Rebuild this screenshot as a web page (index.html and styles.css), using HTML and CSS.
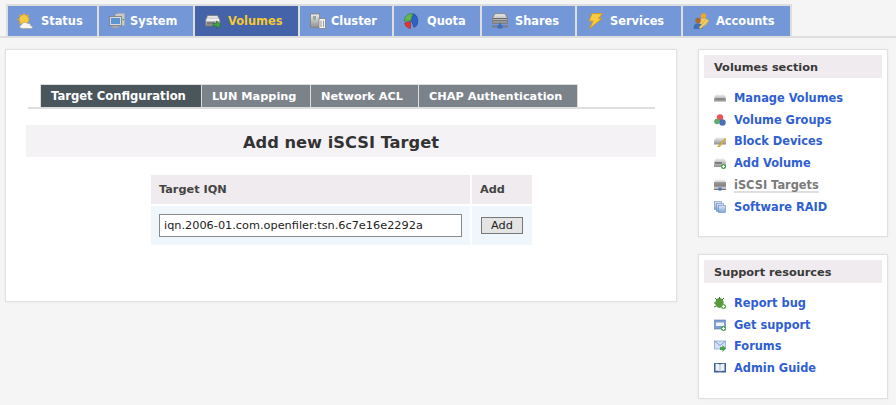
FILE: index.html
```html
<!DOCTYPE html>
<html lang="en">
<head>
<meta charset="utf-8">
<title>Add new iSCSI Target</title>
<link rel="stylesheet" href="styles.css">
</head>
<body>
<svg class="defs" width="0" height="0" aria-hidden="true">
  <defs>
    <linearGradient id="gDisk" x1="0" y1="0" x2="0" y2="1"><stop offset="0" stop-color="#efefef"/><stop offset="1" stop-color="#8f8f8f"/></linearGradient>
    <linearGradient id="gBlue" x1="0" y1="0" x2="0" y2="1"><stop offset="0" stop-color="#dbe6f5"/><stop offset="1" stop-color="#7fa4d6"/></linearGradient>
  </defs>
</svg>
<nav class="topnav">
  <ul class="tabs">
    <li class="tab t-status"><svg class="ico" viewBox="0 0 17 16"><circle cx="7" cy="6.500" r="4.800" fill="#f7c93e" stroke="#e8a51f" stroke-width=".8"/><path d="M7 0v2M1 6.500h-1M2.400 1.800l1.400 1.400M11.600 1.800l-1.400 1.400M2.400 11l1.400-1.400" stroke="#efb02a" stroke-width="1.200"/><path d="M5 15.500c-2.500 0-3-3-.6-3.500.6-2.500 4-3.500 6-1.500 2-.6 3.500 1 3.200 2.200 2.300.2 2.600 2.800.4 2.800z" fill="#f7f6ee" stroke="#a4a49a" stroke-width=".7"/></svg>Status</li>
    <li class="tab t-system"><svg class="ico" viewBox="0 0 16 16"><path d="M6 3V.6h9.500v12H13" fill="#cfcfcf" stroke="#85888c" stroke-width=".8"/><path d="M8.500 .6h7v12H13V3H8.500z" fill="#c9c9c9"/><rect x=".5" y="3.500" width="12" height="9" fill="#d9d9d9" stroke="#787a80" stroke-width=".8"/><rect x="2" y="5" width="9" height="6" fill="#5b96d2"/><path d="M4 12.800h5l1 2.200H3z" fill="#a5a5a5"/><rect x="13.500" y="6" width="1.500" height="1.200" fill="#36a03a"/></svg>System</li>
    <li class="tab current t-volumes"><svg class="ico" viewBox="0 0 16 16"><path d="M2.500 2.500h10l2.500 4.500v6H.600V7z" fill="url(#gDisk)" stroke="#777" stroke-width=".8"/><path d="M1.500 7h12.500" stroke="#fff" stroke-width="1.400"/><rect x="2" y="9" width="8" height="2.400" fill="#7c7c7c"/><path d="M8 10.500h3.500V8l4.400 3.700-4.400 3.800v-2.500H8z" fill="#47a347" stroke="#1f6a2a" stroke-width=".6"/></svg>Volumes</li>
    <li class="tab t-cluster"><svg class="ico" viewBox="0 0 16 16"><rect x=".6" y="1" width="9" height="13.500" fill="url(#gDisk)" stroke="#808080" stroke-width=".8"/><rect x="3" y="3.500" width="3" height="1" fill="#666"/><rect x="3" y="5.500" width="3" height="1" fill="#4a4"/><rect x="9" y="5.500" width="6.500" height="10" fill="#f4f4f4" stroke="#808080" stroke-width=".8"/><path d="M11 7.500v6.500M13.500 7.500v6.500" stroke="#9ca0a4" stroke-width="1.100"/></svg>Cluster</li>
    <li class="tab t-quota"><svg class="ico" viewBox="0 0 16 16"><path d="M1.500 8C1 4.500 4 .6 9.500.300L7.500 8z" fill="#63b94d" stroke="#2e7a2a" stroke-width=".6"/><path d="M10.500.8c4 1.500 5.500 7 3 12l-2.500 1.500L8.500 8z" fill="#2f62c8" stroke="#1c3f8f" stroke-width=".6"/><path d="M7.500 8.500L1.800 10c.3 3 3 5 5.500 5.500z" fill="#ea352b" stroke="#a51d1d" stroke-width=".6"/></svg>Quota</li>
    <li class="tab t-shares"><svg class="ico" viewBox="0 0 16 16"><path d="M3 .6h10l2.500 4.400v5.400H.500V5z" fill="url(#gDisk)" stroke="#777" stroke-width=".8"/><path d="M1 5.500h14M1 7.700h14" stroke="#6a6a6a"/><path d="M8 10v3" stroke="#3a6fc0" stroke-width="2"/><path d="M0 13.500h16" stroke="#7a7a7a" stroke-width="1.800"/><rect x="5.500" y="12" width="5" height="3.500" fill="#3a6fc0"/></svg>Shares</li>
    <li class="tab t-services"><svg class="ico" viewBox="0 0 16 16"><path d="M5 .6h10.400l-4 5h3.500L2.500 15.600l3.500-7.600H2z" fill="#f6cd3f" stroke="#d9971b" stroke-width="1"/></svg>Services</li>
    <li class="tab t-accounts"><svg class="ico" viewBox="0 0 16 16"><circle cx="10.500" cy="3" r="2.800" fill="#eca62a"/><path d="M6.500 12V8.500C6.500 6 8 5.500 10.500 5.500s5 .5 5 3l-3 4z" fill="#f3c55e"/><circle cx="5" cy="7.500" r="2.800" fill="#a66b3b"/><path d="M.6 16c0-4.500 1.200-5.500 4.400-5.500s4.500 1 4.500 5.500z" fill="#3f6fb5"/><path d="M6 14.500l8-8.700 1.700 1.700-8 8.500z" fill="#f6d96c" stroke="#b98a25" stroke-width=".6"/></svg>Accounts</li>
  </ul>
</nav>
<div class="page">
  <main class="card">
    <ul class="subtabs">
      <li class="subtab active">Target Configuration</li>
      <li class="subtab st-lun">LUN Mapping</li>
      <li class="subtab st-acl">Network ACL</li>
      <li class="subtab st-chap">CHAP Authentication</li>
    </ul>
    <h1 class="title">Add new iSCSI Target</h1>
    <table class="form">
      <thead>
        <tr><th class="c-iqn">Target IQN</th><th class="c-add">Add</th></tr>
      </thead>
      <tbody>
        <tr>
          <td class="c-iqn"><input class="iqn" type="text" value="iqn.2006-01.com.openfiler:tsn.6c7e16e2292a"></td>
          <td class="c-add"><button class="btn" type="button">Add</button></td>
        </tr>
      </tbody>
    </table>
  </main>
  <aside class="side">
    <section class="box box-volumes">
      <h2 class="box-head">Volumes section</h2>
      <ul class="links">
        <li><svg class="sico" viewBox="0 0 12 12"><path d="M2 2.500h8l2 3v4H0v-4z" fill="url(#gDisk)"/><rect x="1" y="6" width="10" height="2" fill="#8a8a8a"/></svg><a>Manage Volumes</a></li>
        <li><svg class="sico" viewBox="0 0 12 12"><circle cx="6" cy="3.500" r="3.200" fill="#e8565a"/><circle cx="3" cy="7.500" r="2.800" fill="#5eae5e"/><circle cx="8.500" cy="8.500" r="3.200" fill="#4a6fb8"/></svg><a>Volume Groups</a></li>
        <li><svg class="sico" viewBox="0 0 12 12"><path d="M2 2.500h8l2 3v4H0v-4z" fill="url(#gDisk)"/><path d="M3.500 11.700l7.500-8.500 1 1-6.500 7.800z" fill="#e8bd3e" stroke="#9a7a20" stroke-width=".4"/></svg><a>Block Devices</a></li>
        <li><svg class="sico" viewBox="0 0 12 12"><path d="M2 1.500h8l2 3v5.500H0V4.500z" fill="url(#gDisk)"/><rect x="1" y="5" width="7" height="1.800" fill="#777"/><circle cx="9.500" cy="9.500" r="2.500" fill="#4aa04a"/><path d="M8 9.500h3M9.500 8v3" stroke="#fff"/></svg><a>Add Volume</a></li>
        <li><svg class="sico" viewBox="0 0 12 12"><path d="M2 .5h8l2 3v5H0v-5z" fill="url(#gDisk)"/><path d="M0 4h12M0 6h12" stroke="#666"/><rect x="0" y="9.500" width="12" height="1.500" fill="#777"/><rect x="4.500" y="8.500" width="3" height="3" fill="#3a6fc0"/></svg><a class="here">iSCSI Targets</a></li>
        <li><svg class="sico" viewBox="0 0 12 12"><rect x=".5" y=".5" width="7" height="8" fill="url(#gBlue)" stroke="#6c8fc4" stroke-width=".6"/><rect x="2.500" y="2.500" width="7" height="8" fill="url(#gBlue)" stroke="#6c8fc4" stroke-width=".6"/><rect x="4.500" y="4.500" width="7" height="7" fill="url(#gBlue)" stroke="#6c8fc4" stroke-width=".6"/></svg><a>Software RAID</a></li>
      </ul>
    </section>
    <section class="box box-support">
      <h2 class="box-head">Support resources</h2>
      <ul class="links">
        <li><svg class="sico" viewBox="0 0 12 12"><ellipse cx="5.500" cy="6" rx="4.200" ry="5" fill="#5a9a3c"/><path d="M1 1l2 2M5.500 0v2M10 1L8 3M0 6h2M0 10l2-1" stroke="#3a6a28"/><circle cx="9.500" cy="9.500" r="2.500" fill="#5cb04a"/><path d="M8 9.500h3M9.500 8v3" stroke="#fff"/></svg><a>Report bug</a></li>
        <li><svg class="sico" viewBox="0 0 12 12"><rect x=".5" y="1" width="11" height="9" fill="#7c9ecf" stroke="#5a7dae" stroke-width=".6"/><rect x="2" y="3.500" width="8" height="3.500" fill="#eef3fa"/><circle cx="9.500" cy="9.500" r="2.500" fill="#4aa04a"/><path d="M8 9.500h3M9.500 8v3" stroke="#fff"/></svg><a>Get support</a></li>
        <li><svg class="sico" viewBox="0 0 12 12"><rect x=".5" y="1" width="11" height="8" fill="#d2e1f4" stroke="#6c8fc4" stroke-width=".6"/><path d="M.5 1l5.500 4.500L11.500 1" fill="none" stroke="#6c8fc4" stroke-width=".8"/><path d="M6 7h2.500V5l3.500 3.500L8.500 12v-2H6z" fill="#4aa04a"/></svg><a>Forums</a></li>
        <li><svg class="sico" viewBox="0 0 12 12"><rect x="0" y="1" width="12" height="9.500" fill="#3a5f95"/><path d="M1.500 2c1.500-.5 3-.5 4.300.5v7C4.500 8.500 3 8.500 1.500 9zM10.500 2c-1.500-.5-3-.5-4.300.5v7c1.300-1 2.800-1 4.300-.5z" fill="#eef2f8"/></svg><a>Admin Guide</a></li>
      </ul>
    </section>
  </aside>
</div>
</body>
</html>
```

FILE: styles.css
```css
* { box-sizing: border-box; }
html, body { margin: 0; padding: 0; }
body {
  background: #f5f5f5;
  font-family: "DejaVu Sans", Verdana, sans-serif;
  font-size: 11px;
  color: #333;
  height: 405px;
  overflow: hidden;
}
.defs { position: absolute; }

.topnav {
  padding-top: 4px;
  border-bottom: 2px solid #dedede;
  height: 38px;
}
.tabs {
  list-style: none;
  margin: 0 0 0 6px;
  padding: 2px 2px 0 2px;
  display: inline-flex;
  gap: 2px;
  background: #dedede;
  height: 32px;
}
.tab {
  display: flex;
  align-items: center;
  height: 30px;
  padding-left: 10px;
  background: #7397d7;
  color: #fff;
  font-weight: bold;
  font-size: 11.4px;
}
.tab.current { background: #4463a9; color: #f4c935; }
.ico { width: 16px; height: 16px; flex: none; margin-right: 7px; }
.t-status { width: 89px; padding-left: 9px; }
.t-status .ico { width: 17px; }
.t-system { width: 94px; }
.t-system .ico { margin-right: 5px; }
.t-volumes { width: 103px; }
.t-cluster { width: 92px; }
.t-cluster .ico { margin-right: 5px; }
.t-quota { width: 86px; padding-left: 9px; }
.t-quota .ico { margin-right: 8px; }
.t-shares { width: 93px; }
.t-services { width: 104px; }
.t-accounts { width: 107px; }

.page {
  display: flex;
  align-items: flex-start;
  padding: 11px 0 0 5px;
}
.card {
  width: 672px;
  height: 253px;
  background: #fff;
  border: 1px solid #e2dfe1;
  box-shadow: 0 0 3px rgba(0,0,0,.05);
  padding: 34px 20px 0 20px;
}
.subtabs {
  list-style: none;
  margin: 0 0 16px 2px;
  padding: 0 0 0 12px;
  width: 627px;
  height: 25px;
  display: flex;
  border-bottom: 2px solid #dedede;
  font-size: 11.3px;
}
.subtab {
  height: 23px;
  padding-left: 10px;
  line-height: 23px;
  background: #7b828a;
  color: #fff;
  font-weight: bold;
  white-space: nowrap;
  border-right: 1px solid #dedede;
  border-top: 1px solid #dedede;
}
.subtab.active {
  width: 162px;
  font-size: 11.6px;
  background: #4a565c;
  border-left: 1px solid #dedede;
}
.st-lun { width: 109px; }
.st-acl { width: 108px; }
.st-chap { width: 159px; }
.title {
  margin: 0 0 18px 0;
  height: 32px;
  line-height: 36px;
  width: 630px;
  background: #f5f2f6;
  text-align: center;
  font-size: 16.25px;
  font-weight: bold;
  color: #333;
}
.form {
  border-collapse: separate;
  border-spacing: 0;
  margin-left: 125px;
  width: 381px;
  table-layout: fixed;
}
.form th {
  height: 31px;
  background: #efebee;
  background-clip: padding-box;
  text-align: left;
  padding: 0 8px;
  font-size: 11.3px;
  color: #444;
  border-bottom: 2px solid #fff;
}
.form td {
  height: 39px;
  background: #eff7fd;
  background-clip: padding-box;
  padding: 0 8px;
}
.form th.c-iqn, .form td.c-iqn { width: 321px; border-right: 2px solid #fff; }
.iqn {
  display: block;
  width: 303px;
  height: 23px;
  border: 1px solid #8a8a8a;
  background: #fff;
  padding: 0 4px;
  font-family: "DejaVu Sans", Verdana, sans-serif;
  font-size: 11.3px;
  color: #222;
  border-radius: 0;
  outline: none;
}
.btn {
  display: block;
  width: 42px;
  height: 17px;
  margin-left: 1px;
  padding: 0;
  border: 1px solid #777;
  background: #e4e4e4;
  font-family: "DejaVu Sans", Verdana, sans-serif;
  font-size: 11.3px;
  color: #222;
  border-radius: 0;
}

.side {
  margin-left: 21px;
  width: 190px;
  display: flex;
  flex-direction: column;
  gap: 17px;
}
.box {
  background: #fff;
  border: 1px solid #e2dfe1;
  box-shadow: 0 0 3px rgba(0,0,0,.05);
  padding: 5px 5px 0 5px;
}
.box-volumes { height: 188px; }
.box-support { height: 145px; }
.box-head {
  margin: 0 0 9px 0;
  height: 23px;
  line-height: 25px;
  padding-left: 10px;
  background: #efebee;
  font-size: 11.3px;
  font-weight: bold;
  color: #3a3a3a;
}
.links { list-style: none; margin: 0; padding: 0 0 0 10px; }
.links li {
  display: flex;
  align-items: center;
  height: 21.8px;
}
.sico { width: 12px; height: 12px; flex: none; margin-right: 8px; }
.links a { color: #2f5fd0; font-weight: bold; font-size: 11.4px; }
.links a.here {
  color: #7a7a7a;
  text-decoration: underline #dedede 2px;
  text-underline-offset: 2px;
}
```
